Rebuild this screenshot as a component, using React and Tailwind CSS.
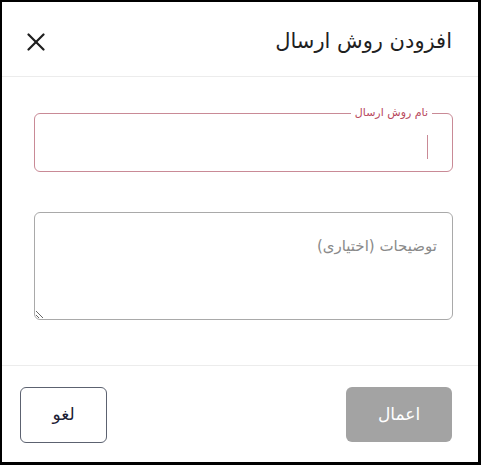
const CloseIcon = () => (
  <svg width="18" height="18" viewBox="0 0 18 18" fill="none" stroke="#1f1f1f" strokeWidth="2.2" strokeLinecap="round">
    <path d="M1.5 1.5 L16.5 16.5" />
    <path d="M16.5 1.5 L1.5 16.5" />
  </svg>
);

const App = () => {
  return (
    <div
      dir="rtl"
      className="w-[481px] h-[465px] bg-white border-black border-t-[2px] border-l-[2px] border-r-[3px] border-b-[3px] flex flex-col font-['DejaVu_Sans',sans-serif]"
    >
      {/* header */}
      <div className="h-[75px] flex items-center justify-between pr-[26px] pl-[25px] pt-[5px] border-b border-[#ececec]">
        <h1 className="text-[21px] text-[#1f1f1f]">افزودن روش ارسال</h1>
        <CloseIcon />
      </div>

      {/* body */}
      <div className="flex-1 pr-[25px] pl-[32px] pt-[36px] flex flex-col border-b border-[#ececec]">
        <div className="relative h-[59px] rounded-[6px] border border-[#c98a96] flex items-center pr-[24px] pt-[8px]">
          <span className="absolute -top-[8px] right-[20px] bg-white px-[4px] text-[11px] leading-[14px] text-[#b8485c]">
            نام روش ارسال
          </span>
          <span className="w-[1px] h-[24px] bg-[#c98a96]" />
        </div>

        <textarea
          placeholder="توضیحات (اختیاری)"
          className="mt-[40px] h-[108px] w-full rounded-[6px] border border-[#a9a9a9] pr-[15px] pt-[22px] text-[15px] text-[#222] placeholder:text-[#8a8a8a] outline-none"
        />
      </div>

      {/* footer */}
      <div className="h-[96px] flex items-center justify-between pr-[26px] pl-[18px] pt-[1px]">
        <button className="w-[106px] h-[55px] rounded-[6px] bg-[#a3a3a3] text-white text-[17px]">
          اعمال
        </button>
        <button className="w-[87px] h-[56px] rounded-[6px] border border-[#5c6270] text-[#1b2035] text-[17px]">
          لغو
        </button>
      </div>
    </div>
  );
};

export default App;
